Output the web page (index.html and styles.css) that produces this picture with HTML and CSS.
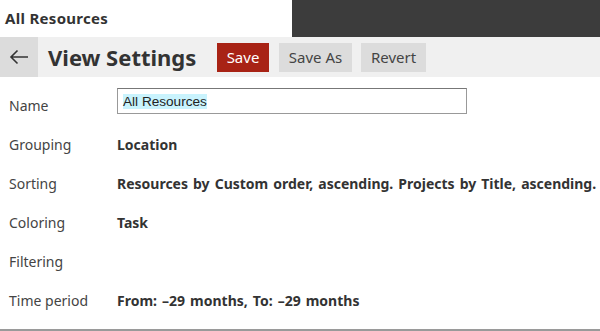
FILE: index.html
```html
<!DOCTYPE html>
<html>
<head>
<meta charset="utf-8">
<link rel="stylesheet" href="styles.css">
</head>
<body>
<div class="page">
  <header class="topbar">
    <div class="doc-title">All Resources</div>
    <div class="dark-panel"></div>
  </header>
  <div class="toolbar">
    <button class="back" aria-label="Back">
      <svg width="20" height="16" viewBox="0 0 20 16"><path d="M19 8H2M8.5 1.5L2 8l6.5 6.5" fill="none" stroke="#333" stroke-width="1.6"/></svg>
    </button>
    <h1 class="heading">View Settings</h1>
    <div class="actions">
      <button class="btn btn-primary">Save</button>
      <button class="btn btn-saveas">Save As</button>
      <button class="btn btn-revert">Revert</button>
    </div>
  </div>
  <div class="form">
    <div class="row row-name">
      <div class="label">Name</div>
      <div class="value"><div class="input"><span class="sel">All Resources</span></div></div>
    </div>
    <div class="row">
      <div class="label">Grouping</div>
      <div class="value strong">Location</div>
    </div>
    <div class="row">
      <div class="label">Sorting</div>
      <div class="value strong">Resources by Custom order, ascending. Projects by Title, ascending.</div>
    </div>
    <div class="row">
      <div class="label">Coloring</div>
      <div class="value strong">Task</div>
    </div>
    <div class="row">
      <div class="label">Filtering</div>
      <div class="value strong"></div>
    </div>
    <div class="row">
      <div class="label">Time period</div>
      <div class="value strong">From: –29 months, To: –29 months</div>
    </div>
  </div>
</div>
</body>
</html>
```
FILE: styles.css
```css
* { box-sizing: border-box; }
html, body { margin: 0; padding: 0; background: #fff; }
body { font-family: "Noto Sans", "Open Sans", sans-serif; color: #333; width: 600px; height: 331px; overflow: hidden; }
.page { height: 331px; border-bottom: 2px solid #9a9a9a; }
.topbar { display: flex; height: 37px; }
.doc-title { flex: 0 0 292px; font-weight: bold; font-size: 15px; letter-spacing: 0.3px; padding-left: 5px; line-height: 37px; color: #333; }
.dark-panel { flex: 1; background: #3c3c3c; }
.toolbar { display: flex; align-items: center; height: 40px; background: #f0f0f0; }
.back { width: 38px; height: 40px; border: 0; background: #dcdcdc; padding: 0; display: flex; align-items: center; justify-content: center; cursor: pointer; }
.heading { margin: 0 0 0 10px; font-size: 22px; font-weight: bold; color: #333; width: 169px; white-space: nowrap; }
.actions { display: flex; gap: 9px; }
.btn { height: 29px; border: 0; background: #dcdcdc; color: #444; font-family: inherit; font-size: 15px; padding: 0; }
.btn-primary { background: #a82315; color: #fff; width: 52px; }
.btn-saveas { width: 73px; margin-left: 1px; }
.btn-revert { width: 65px; }
.form { padding-top: 11px; }
.row { display: flex; align-items: center; height: 39px; font-size: 14px; }
.row-name { height: 28px; margin-bottom: 9px; align-items: flex-start; }
.row-name .label { padding-top: 8px; }
.label { width: 117px; padding-left: 9px; color: #444; }
.value { color: #333; }
.strong { font-weight: bold; word-spacing: 1.4px; }
.input { width: 350px; height: 26px; border: 1px solid #999; border-top-color: #777; display: flex; align-items: center; padding-left: 5px; font-family: "Liberation Sans", Arial, sans-serif; font-size: 13.6px; color: #222; }
.sel { background: #c9f3fd; }
```
